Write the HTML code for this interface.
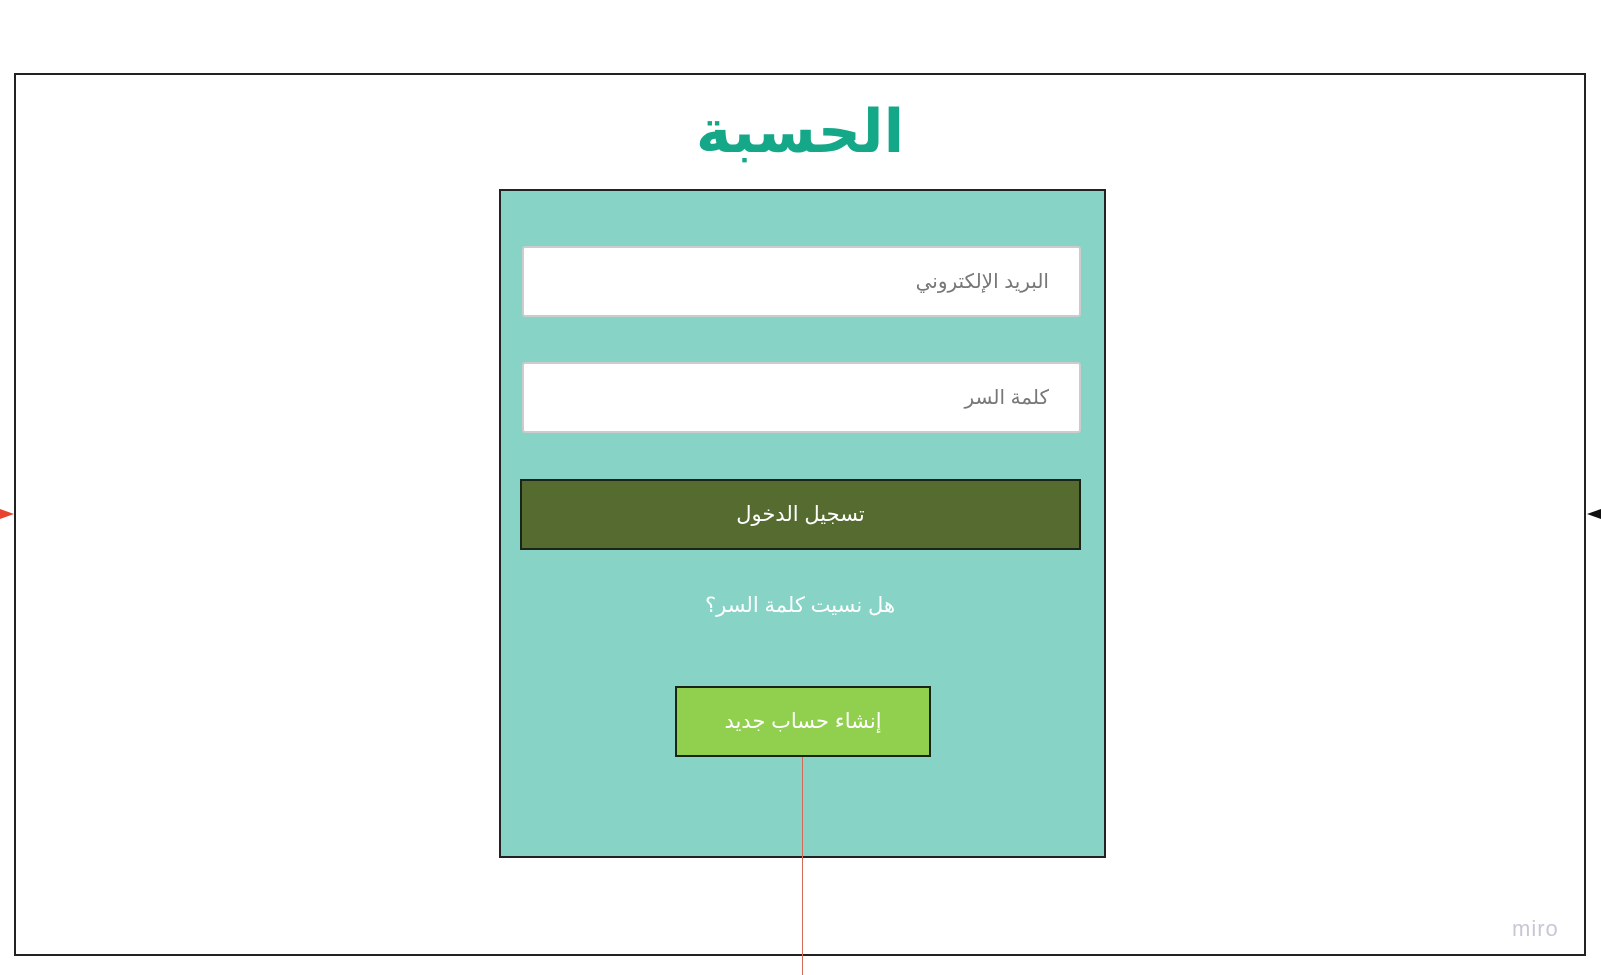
<!DOCTYPE html>
<html><head><meta charset="utf-8"><style>
body{margin:0;width:1601px;height:975px;background:#fff;position:relative;overflow:hidden;font-family:"Liberation Sans","DejaVu Sans",sans-serif}
div{position:absolute;box-sizing:border-box}
.t{display:flex;align-items:center;justify-content:center;direction:rtl}
</style></head><body>
<div style="left:14px;top:73px;width:1572px;height:883px;border:2px solid #222"></div>
<div class="t" style="left:600px;top:92px;width:400px;height:80px;color:#14a889;font-size:60px;font-weight:bold">الحسبة</div>
<div style="left:499px;top:189px;width:607px;height:669px;background:#87d4c6;border:2px solid #222"></div>
<div class="t" style="left:522px;top:246px;width:559px;height:71px;background:#fff;border:2px solid #ccc;border-radius:3px;justify-content:flex-start;padding-right:30px;font-size:20px;color:#777">البريد الإلكتروني</div>
<div class="t" style="left:522px;top:362px;width:559px;height:71px;background:#fff;border:2px solid #ccc;border-radius:3px;justify-content:flex-start;padding-right:30px;font-size:20px;color:#777">كلمة السر</div>
<div class="t" style="left:520px;top:479px;width:561px;height:71px;background:#556b30;border:2px solid #1a2418;color:#fff;font-size:21px">تسجيل الدخول</div>
<div class="t" style="left:600px;top:590px;width:400px;height:30px;color:#fff;font-size:21px">هل نسيت كلمة السر؟</div>
<div class="t" style="left:675px;top:686px;width:256px;height:71px;background:#91d04e;border:2px solid #1a2418;color:#fff;font-size:21px">إنشاء حساب جديد</div>
<div style="left:802px;top:757px;width:1px;height:218px;background:#d56a5a"></div>
<div style="left:0;top:509px;width:0;height:0;border-top:5px solid transparent;border-bottom:5px solid transparent;border-left:14px solid #e8432e"></div>
<div style="left:1587px;top:509px;width:0;height:0;border-top:5px solid transparent;border-bottom:5px solid transparent;border-right:14px solid #111"></div>
<div style="left:1512px;top:916px;font-size:22px;color:#c8c8d4;letter-spacing:1px">miro</div>
</body></html>
